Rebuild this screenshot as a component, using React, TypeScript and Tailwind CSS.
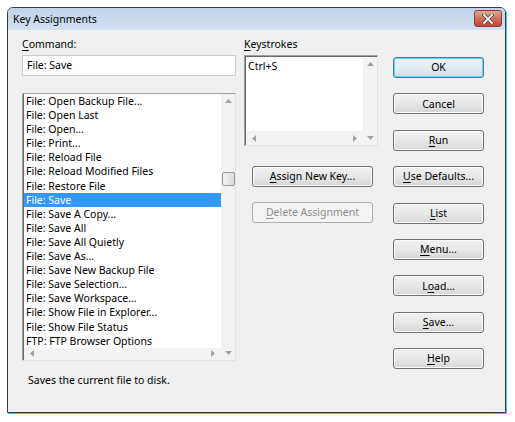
import React from "react";

type Dir = "up" | "down" | "left" | "right";

const Tri = ({ dir }: { dir: Dir }) => {
  const vertical = dir === "up" || dir === "down";
  const w = vertical ? 7 : 4;
  const h = vertical ? 4 : 7;
  const pts = {
    up: "0,4 3.5,0 7,4",
    down: "0,0 7,0 3.5,4",
    left: "4,0 4,7 0,3.5",
    right: "0,0 0,7 4,3.5",
  }[dir];
  return (
    <svg width={w} height={h} viewBox={`0 0 ${w} ${h}`} className="block">
      <polygon points={pts} fill="#a0a0a0" />
    </svg>
  );
};

const U = ({ children }: { children: React.ReactNode }) => (
  <span className="underline underline-offset-[2px] decoration-[1px]">{children}</span>
);

const Btn = ({
  children,
  wide,
  def,
  disabled,
}: {
  children: React.ReactNode;
  wide?: boolean;
  def?: boolean;
  disabled?: boolean;
}) => {
  const base =
    "h-[21px] rounded-[3px] flex items-center justify-center text-[10.5px] leading-none";
  const width = wide ? "w-[121px]" : "w-[91px]";
  if (disabled) {
    return (
      <div className={`${base} ${width} border border-[#adb2b5] bg-[#f4f4f4] text-[#8d8d8d]`}>
        {children}
      </div>
    );
  }
  if (def) {
    return (
      <div
        className={`${base} ${width} border border-[#3c7fb1] bg-gradient-to-b from-[#eef3f7] via-[#e3ecf2] to-[#cfdde8] shadow-[inset_0_0_0_1px_#62d2f5] text-black`}
      >
        {children}
      </div>
    );
  }
  return (
    <div
      className={`${base} ${width} border border-[#707070] bg-gradient-to-b from-[#f2f2f2] via-[#e8e8e8] to-[#d6d6d6] shadow-[inset_0_0_0_1px_#fcfcfc] text-black`}
    >
      {children}
    </div>
  );
};

const items = [
  "File: Open Backup File...",
  "File: Open Last",
  "File: Open...",
  "File: Print...",
  "File: Reload File",
  "File: Reload Modified Files",
  "File: Restore File",
  "File: Save",
  "File: Save A Copy...",
  "File: Save All",
  "File: Save All Quietly",
  "File: Save As...",
  "File: Save New Backup File",
  "File: Save Selection...",
  "File: Save Workspace...",
  "File: Show File in Explorer...",
  "File: Show File Status",
  "FTP: FTP Browser Options",
];

export default function App() {
  return (
    <div className="w-[515px] h-[422px] bg-white overflow-hidden font-['Noto_Sans',sans-serif] text-[10.5px] text-black">
      <div className="ml-[7px] mt-[7px] w-[499px] h-[406px] border border-[#3b3b3b] rounded-t-[6px] shadow-[1px_1px_0_0_#3cc4ea] flex flex-col overflow-hidden">
        {/* Title bar */}
        <div className="h-[22px] shrink-0 bg-gradient-to-b from-[#bfd3ea] to-[#d3e1f1] flex items-start">
          <div className="pl-[5px] pt-[4px] leading-[14px] text-[10.5px] flex-1">Key Assignments</div>
          <div className="mt-[2px] mr-[3px] w-[28px] h-[17px] rounded-[3px] border border-[#8a3a30] bg-gradient-to-b from-[#e7a797] via-[#d0705f] to-[#c0463a] flex items-center justify-center">
            <svg width="12" height="10" viewBox="0 0 12 10">
              <path d="M2 1 L10 9 M10 1 L2 9" stroke="#5a2a25" strokeWidth="3.4" strokeLinecap="square" />
              <path d="M2 1 L10 9 M10 1 L2 9" stroke="#ffffff" strokeWidth="2" strokeLinecap="square" />
            </svg>
          </div>
        </div>

        {/* Body */}
        <div className="flex-1 bg-[#f0f0f0] flex">
          {/* Left column */}
          <div className="ml-[14px] w-[214px] flex flex-col">
            <div className="mt-[7px] h-[14px] leading-[14px]">
              <U>C</U>ommand:
            </div>
            <div className="mt-[4px] h-[21px] bg-white border border-[#c9ccd1] flex items-center pl-[4px] leading-none">
              File: Save
            </div>
            <div className="mt-[17px] h-[268px] bg-white border-t border-l border-[#a0a0a0] border-b border-r border-b-[#e3e3e3] border-r-[#e3e3e3] flex">
              <div className="flex-1 flex flex-col border-l border-[#696969]">
                <div className="flex-1">
                  {items.map((t, i) =>
                    i === 7 ? (
                      <div key={t} className="h-[14.1px] leading-[14.1px] pl-[2px] bg-[#3399ff] text-white whitespace-nowrap">
                        {t}
                      </div>
                    ) : (
                      <div key={t} className="h-[14.1px] leading-[14.1px] pl-[2px] whitespace-nowrap">
                        {t}
                      </div>
                    )
                  )}
                </div>
                <div className="h-[14px] bg-[#f3f3f3] flex items-center justify-between px-[6px]">
                  <Tri dir="left" />
                  <Tri dir="right" />
                </div>
              </div>
              <div className="w-[14px] bg-[#f3f3f3] flex flex-col items-center">
                <div className="h-[14px] flex items-center">
                  <Tri dir="up" />
                </div>
                <div className="mt-[64px] w-[13px] h-[14px] rounded-[2px] border border-[#969696] bg-gradient-to-r from-[#f4f4f4] to-[#dcdcdc]" />
                <div className="flex-1" />
                <div className="h-[14px] flex items-center">
                  <Tri dir="down" />
                </div>
              </div>
            </div>
            <div className="mt-[12px] ml-[6px] h-[14px] leading-[14px]">Saves the current file to disk.</div>
          </div>

          {/* Middle column */}
          <div className="ml-[8px] w-[134px] flex flex-col">
            <div className="mt-[7px] h-[14px] leading-[14px]">
              <U>K</U>eystrokes
            </div>
            <div className="mt-[4px] h-[91px] bg-white border-t border-l border-[#a0a0a0] border-b border-r border-b-[#e3e3e3] border-r-[#e3e3e3] flex">
              <div className="flex-1 flex flex-col border-t border-l border-[#696969]">
                <div className="flex-1 pl-[2px] pt-[2px] leading-[14px]">Ctrl+S</div>
                <div className="h-[14px] bg-[#f3f3f3] flex items-center justify-between px-[6px]">
                  <Tri dir="left" />
                  <Tri dir="right" />
                </div>
              </div>
              <div className="w-[14px] bg-[#f3f3f3] border-t border-[#696969] flex flex-col items-center justify-between">
                <div className="h-[14px] flex items-center">
                  <Tri dir="up" />
                </div>
                <div className="h-[14px] flex items-center">
                  <Tri dir="down" />
                </div>
              </div>
            </div>
            <div className="mt-[20px] ml-[8px] flex flex-col gap-[15px]">
              <Btn wide>
                <span>
                  <U>A</U>ssign New Key...
                </span>
              </Btn>
              <Btn wide disabled>
                <span>
                  <U>D</U>elete Assignment
                </span>
              </Btn>
            </div>
          </div>

          {/* Right column */}
          <div className="ml-[15px] mt-[27px] flex flex-col gap-[15.4px]">
            <Btn def>OK</Btn>
            <Btn>Cancel</Btn>
            <Btn>
              <span>
                <U>R</U>un
              </span>
            </Btn>
            <Btn>
              <span>
                <U>U</U>se Defaults...
              </span>
            </Btn>
            <Btn>
              <span>
                <U>L</U>ist
              </span>
            </Btn>
            <Btn>
              <span>
                <U>M</U>enu...
              </span>
            </Btn>
            <Btn>
              <span>
                L<U>o</U>ad...
              </span>
            </Btn>
            <Btn>
              <span>
                <U>S</U>ave...
              </span>
            </Btn>
            <Btn>
              <span>
                <U>H</U>elp
              </span>
            </Btn>
          </div>
        </div>
      </div>
    </div>
  );
}
